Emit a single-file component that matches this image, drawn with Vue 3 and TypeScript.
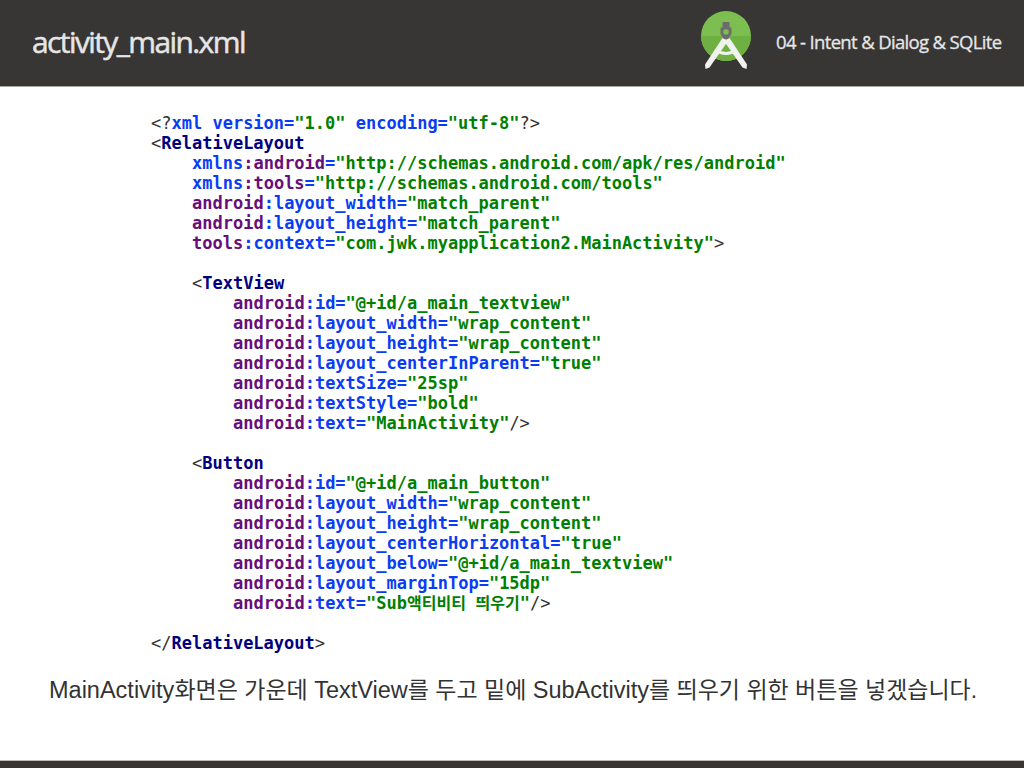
<script setup lang="ts">
type Seg = [string, string];
const attr = (ns: string, name: string, val: string, end = ''): Seg[] => {
  const out: Seg[] = [['ns', ns], ['at', ':' + name + '='], ['st', '"' + val + '"']];
  if (end) out.push(['pu', end]);
  return out;
};
const lines: { indent: number; segs: Seg[] }[] = [
  { indent: 0, segs: [['pu', '<?'], ['at', 'xml version='], ['st', '"1.0"'], ['at', ' encoding='], ['st', '"utf-8"'], ['pu', '?>']] },
  { indent: 0, segs: [['pu', '<'], ['tg', 'RelativeLayout']] },
  { indent: 1, segs: [['at', 'xmlns'], ['ns', ':android'], ['at', '='], ['st', '"http://schemas.android.com/apk/res/android"']] },
  { indent: 1, segs: [['at', 'xmlns'], ['ns', ':tools'], ['at', '='], ['st', '"http://schemas.android.com/tools"']] },
  { indent: 1, segs: attr('android', 'layout_width', 'match_parent') },
  { indent: 1, segs: attr('android', 'layout_height', 'match_parent') },
  { indent: 1, segs: attr('tools', 'context', 'com.jwk.myapplication2.MainActivity', '>') },
  { indent: 0, segs: [] },
  { indent: 1, segs: [['pu', '<'], ['tg', 'TextView']] },
  { indent: 2, segs: attr('android', 'id', '@+id/a_main_textview') },
  { indent: 2, segs: attr('android', 'layout_width', 'wrap_content') },
  { indent: 2, segs: attr('android', 'layout_height', 'wrap_content') },
  { indent: 2, segs: attr('android', 'layout_centerInParent', 'true') },
  { indent: 2, segs: attr('android', 'textSize', '25sp') },
  { indent: 2, segs: attr('android', 'textStyle', 'bold') },
  { indent: 2, segs: attr('android', 'text', 'MainActivity', '/>') },
  { indent: 0, segs: [] },
  { indent: 1, segs: [['pu', '<'], ['tg', 'Button']] },
  { indent: 2, segs: attr('android', 'id', '@+id/a_main_button') },
  { indent: 2, segs: attr('android', 'layout_width', 'wrap_content') },
  { indent: 2, segs: attr('android', 'layout_height', 'wrap_content') },
  { indent: 2, segs: attr('android', 'layout_centerHorizontal', 'true') },
  { indent: 2, segs: attr('android', 'layout_below', '@+id/a_main_textview') },
  { indent: 2, segs: attr('android', 'layout_marginTop', '15dp') },
  { indent: 2, segs: [['ns', 'android'], ['at', ':text='], ['st', '"Sub'], ['ko', '액티비티 띄우기'], ['st', '"'], ['pu', '/>']] },
  { indent: 0, segs: [] },
  { indent: 0, segs: [['pu', '</'], ['tg', 'RelativeLayout'], ['pu', '>']] },
];
</script>

<template>
  <div class="page">
    <header class="top">
      <h1 class="title">activity_main.xml</h1>
      <svg class="logo" viewBox="0 0 56 60" width="56" height="60" aria-hidden="true">
        <circle cx="28" cy="26" r="25" fill="#7cbf50" />
        <path d="M3 26 A25 25 0 0 0 53 26 Z" fill="#6fb043" />
        <path d="M17 40 Q28 47 39 40" fill="none" stroke="#f1f2ee" stroke-width="3.2" />
        <path d="M24.5 28 L30 31 L11.5 57.5 L7.5 59 L7 54.5 Z" fill="#f1f2ee" />
        <path d="M31.5 28 L26 31 L44.5 57.5 L48.5 59 L49 54.5 Z" fill="#f1f2ee" />
        <path d="M24.5 12 H31.5 V17.5 H33.5 V24 L30 29 H26 L22.5 24 V17.5 H24.5 Z" fill="#6c6c6c" />
        <circle cx="28" cy="22" r="2.8" fill="#7cbf50" />
      </svg>
      <div class="chapter">04 - Intent &amp; Dialog &amp; SQLite</div>
    </header>

    <main class="body">
      <pre class="code"><div v-for="(l, i) in lines" :key="i" class="line" :class="'in' + l.indent"><span v-for="(s, j) in l.segs" :key="j" :class="s[0]">{{ s[1] }}</span></div></pre>
      <p class="note"><span class="lat">MainActivity</span>화면은 가운데 <span class="lat">TextView</span>를 두고 밑에 <span class="lat">SubActivity</span>를 띄우기 위한 버튼을 넣겠습니다.</p>
    </main>

    <footer class="bottom"></footer>
  </div>
</template>

<style>
html, body { margin: 0; background: #fff; }
</style>

<style scoped>
.page {
  width: 1024px;
  height: 768px;
  display: flex;
  flex-direction: column;
  overflow: hidden;
  background: #fff;
}
.top {
  height: 87px;
  flex: none;
  background: #373635;
  border-bottom: 1px solid #a5a5a5;
  box-sizing: border-box;
  display: flex;
  align-items: center;
  color: #e6e6e6;
  font-family: "Open Sans", "Noto Sans", sans-serif;
}
.title {
  margin: 0 0 4px 32px;
  width: 666px;
  flex: none;
  font-size: 30px;
  font-weight: 400;
  letter-spacing: -1.6px;
  white-space: nowrap;
  -webkit-text-stroke: 0.5px #e6e6e6;
}
.logo {
  flex: none;
  align-self: flex-start;
  margin-top: 10px;
}
.chapter {
  margin: 0 0 4px 22px;
  font-size: 18.5px;
  letter-spacing: -0.65px;
  white-space: nowrap;
  -webkit-text-stroke: 0.3px #e6e6e6;
}
.body {
  flex: 1;
  display: flex;
  flex-direction: column;
  padding: 26px 0 0 0;
}
.code {
  margin: 0 0 0 151px;
  font-family: "DejaVu Sans Mono", "Noto Sans CJK KR", monospace;
  font-weight: 700;
  font-size: 17px;
  line-height: 20px;
  color: #333;
}
.line { height: 20px; white-space: pre; }
.in1 { padding-left: 41px; }
.in2 { padding-left: 82px; }
.pu { color: #333; font-weight: 400; }
.tg { color: #000080; }
.ns { color: #660e7a; }
.at { color: #0a3cf5; }
.st { color: #008000; }
.ko { color: #008000; font-size: 16px; }
.note {
  margin: 22px 0 0 49px;
  font-family: "Liberation Sans", "Noto Sans CJK KR", sans-serif;
  font-size: 23px;
  line-height: 30px;
  color: #333;
  white-space: nowrap;
}
.lat {
  font-size: 23.5px;
}
.bottom {
  height: 8px;
  flex: none;
  background: #373635;
  border-top: 1px solid #bbb;
  box-sizing: border-box;
}
</style>
